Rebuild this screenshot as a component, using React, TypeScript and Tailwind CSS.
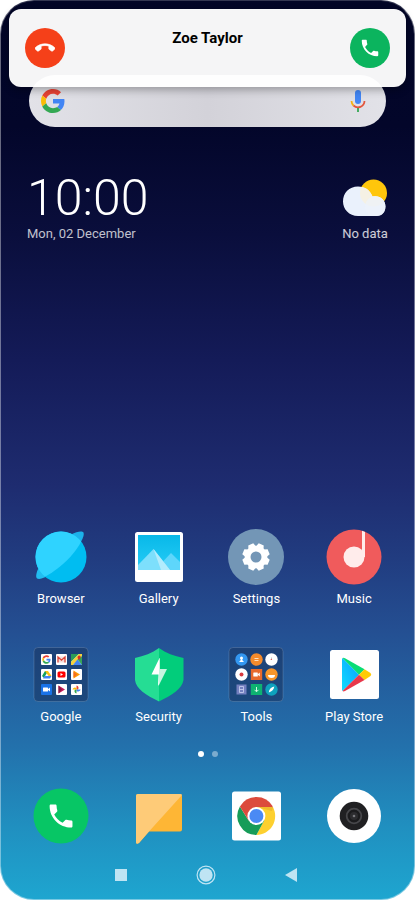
import type { ReactNode } from "react";

const PHONE_PATH =
  "M6.62 10.79c1.44 2.83 3.76 5.14 6.59 6.59l2.2-2.2c.27-.27.67-.36 1.02-.24 1.12.37 2.33.57 3.57.57.55 0 1 .45 1 1V20c0 .55-.45 1-1 1-9.39 0-17-7.61-17-17 0-.55.45-1 1-1h3.5c.55 0 1 .45 1 1 0 1.25.2 2.45.57 3.57.11.35.03.74-.25 1.02l-2.2 2.2z";

const HANG_UP_PATH =
  "M12 9c-1.6 0-3.15.25-4.6.72v3.1c0 .39-.23.74-.56.9-.98.49-1.87 1.12-2.66 1.85-.18.18-.43.28-.7.28-.28 0-.53-.11-.71-.29L.29 13.08c-.18-.17-.29-.42-.29-.7 0-.28.11-.53.29-.71C3.34 8.78 7.46 7 12 7s8.66 1.78 11.71 4.67c.18.18.29.43.29.71 0 .28-.11.53-.29.71l-2.48 2.48c-.18.18-.43.29-.71.29-.27 0-.52-.11-.7-.28-.79-.74-1.69-1.36-2.67-1.85-.33-.16-.56-.5-.56-.9v-3.1C15.15 9.25 13.6 9 12 9z";

function GoogleMark() {
  return (
    <>
      <path fill="#EA4335" d="M24 9.5c3.54 0 6.71 1.22 9.21 3.6l6.85-6.85C35.9 2.38 30.47 0 24 0 14.62 0 6.51 5.38 2.56 13.22l7.98 6.19C12.43 13.72 17.74 9.5 24 9.5z" />
      <path fill="#4285F4" d="M46.98 24.55c0-1.57-.15-3.09-.38-4.55H24v9.02h12.94c-.58 2.96-2.26 5.48-4.78 7.18l7.73 6c4.51-4.18 7.09-10.36 7.09-17.65z" />
      <path fill="#FBBC05" d="M10.53 28.59c-.48-1.45-.76-2.99-.76-4.59s.27-3.14.76-4.59l-7.98-6.19C.92 16.46 0 20.12 0 24c0 3.88.92 7.54 2.56 10.78l7.97-6.19z" />
      <path fill="#34A853" d="M24 48c6.48 0 11.93-2.13 15.89-5.81l-7.73-6c-2.15 1.45-4.92 2.3-8.16 2.3-6.26 0-11.57-4.22-13.47-9.91l-7.98 6.19C6.51 42.62 14.62 48 24 48z" />
    </>
  );
}

function Icon({ children }: { children: ReactNode }) {
  return (
    <svg viewBox="0 0 56 56" className="size-14" aria-hidden="true">
      {children}
    </svg>
  );
}

function BrowserIcon() {
  return (
    <Icon>
      <defs>
        <clipPath id="globe">
          <circle cx="28" cy="28" r="25.5" />
        </clipPath>
      </defs>
      <path d="M38 5.500C44 2.500 49 1.500 50.500 3.500 52 7 47 15 42 22Z" fill="#1cb2ea" />
      <path d="M6 38C3 44 2.500 48 4 49.500 7 51 12 48.500 18 45Z" fill="#22bdf0" />
      <circle cx="28" cy="28" r="25.500" fill="#00bdf1" />
      <path d="M0 0H52C50 14 41 25 30 35 22 42 15 46.500 9 49L0 50Z" fill="#2fd3ff" clipPath="url(#globe)" />
    </Icon>
  );
}

function GalleryIcon() {
  return (
    <Icon>
      <defs>
        <linearGradient id="sky" x1="0" y1="0" x2="0" y2="1">
          <stop offset="0" stopColor="#08b8e8" />
          <stop offset="1" stopColor="#26cdf7" />
        </linearGradient>
      </defs>
      <rect x="4" y="3" width="48" height="50" rx="2.500" fill="#fff" />
      <rect x="7" y="6" width="42" height="35" fill="url(#sky)" />
      <path d="M24 41 40 24 49 33V41Z" fill="#5ed6fb" />
      <path d="M7 36 22.500 20 39 41H7Z" fill="#7ddffc" />
      <path d="M22.500 20 39 41H30Z" fill="#b3ecfd" />
    </Icon>
  );
}

function SettingsIcon() {
  return (
    <Icon>
      <circle cx="28" cy="28" r="28" fill="#7396b6" />
      <g fill="#fff">
        <circle cx="28" cy="28" r="11.300" />
        {[22.5, 67.5, 112.5, 157.5].map((angle) => (
          <path
            key={angle}
            d="M24 18 25.300 14.300H30.700L32 18V38L30.700 41.700H25.300L24 38Z"
            transform={`rotate(${angle} 28 28)`}
          />
        ))}
      </g>
      <circle cx="28" cy="28" r="5.500" fill="#7396b6" />
    </Icon>
  );
}

function MusicIcon() {
  return (
    <Icon>
      <circle cx="28" cy="28" r="27.500" fill="#f05b5c" />
      <circle cx="28" cy="28" r="10.500" fill="#ffeceb" />
      <path d="M36 1.800 39 3V28H36Z" fill="#ffeceb" />
    </Icon>
  );
}

function SecurityIcon() {
  return (
    <Icon>
      <path d="M28 1C21 6 13 9 4 11V33C5 42 15 48 28 54.500Z" fill="#25dd94" />
      <path d="M28 1C35 6 43 9 52.500 11V33C51 42 41 48 28 54.500Z" fill="#02cd7b" />
      <path d="M28.500 11 20.500 27.500H27.500L27 39 28 37.500V11Z" fill="#fff" />
      <path d="M28 12V38L36 22H29V11Z" fill="#c5f5e0" />
    </Icon>
  );
}

function PlayIcon() {
  return (
    <Icon>
      <defs>
        <linearGradient id="playBlue" x1="1" y1="0" x2="0" y2="1">
          <stop offset="0" stopColor="#0a9fff" />
          <stop offset="1" stopColor="#11dcff" />
        </linearGradient>
      </defs>
      <rect x="4" y="3" width="49" height="49" rx="2.500" fill="#fff" />
      <path d="M16.500 11Q16 11.500 16 12.500V42.500Q16 43.500 16.500 44L33 27.800Z" fill="url(#playBlue)" />
      <path d="M16.500 11Q17.500 10.500 19 11.300L38.500 22.300 33 27.800Z" fill="#08dd76" />
      <path d="M38.500 22.300 44.500 26Q46 27.800 44.500 29L38.500 33 33 27.800Z" fill="#ffcb05" />
      <path d="M16.500 44Q17.500 44.800 19 44L38.500 33 33 27.800Z" fill="#e8384b" />
    </Icon>
  );
}

function FolderBase() {
  return <rect x="1" y="0.500" width="54" height="54" rx="4" fill="#17335f" fillOpacity="0.550" stroke="#fff" strokeOpacity="0.150" />;
}

function GoogleFolderIcon() {
  return (
    <Icon>
      <FolderBase />
      {[7, 22, 37].map((y) =>
        [8, 23, 38].map((x) => (
          <rect key={`${x}-${y}`} x={x} y={y} width="11" height="11" rx="1" fill={x === 8 && y === 37 ? "#1a73e8" : "#fff"} />
        )),
      )}
      <g transform="translate(9.300 8.300) scale(0.175)">
        <GoogleMark />
      </g>
      <path d="M24.500 9.500H32.500V15.500H24.500Z" fill="#f3dedc" />
      <path d="M25 15.500V10L28.500 13.200 32 10V15.500" fill="none" stroke="#dc4437" strokeWidth="1.300" />
      <path d="M38 7H46L38 15Z" fill="#2d9c59" />
      <path d="M38 15 46 7H49V9L40 18H38Z" fill="#f5d13d" />
      <path d="M40 18 44.500 12.500 49 18Z" fill="#4285f4" />
      <path d="M44.500 12.500 49 9V18Z" fill="#35a35a" />
      <path d="M46 13C44 11 44 9 46 8.500 48.500 9 48 11 46 13Z" fill="#d93025" />
      <path d="M12 24H15L11 31 9 29Z" fill="#13a05d" />
      <path d="M12 24H15L18.500 29H15.500Z" fill="#fbc116" />
      <path d="M11.500 29H18.500L17 31.500H10Z" fill="#4285f4" />
      <rect x="24.500" y="24.500" width="8" height="6" rx="1.500" fill="#f00" />
      <path d="M27.500 26V29L30 27.500Z" fill="#fff" />
      <path d="M40.500 23.500 47 27.500 40.500 31.500Z" fill="#ff9800" />
      <path d="M40.500 24.500 44 27.500 40.500 30.500Z" fill="#f36d21" />
      <rect x="10" y="40.500" width="5" height="4" rx="0.500" fill="#fff" />
      <path d="M14.500 42.500 17 40.500V44.500Z" fill="#fff" />
      <path d="M25.500 38.500 32 42.500 25.500 46.500Z" fill="#c2185b" />
      <path d="M25.500 38.500 29 42.500 25.500 46.500Z" fill="#8c1d3f" />
      <path d="M43.500 42.500V38.500A2.500 2.500 0 0 1 45 42.500Z" fill="#ea4335" />
      <path d="M43.500 42.500H47.500A2.500 2.500 0 0 1 43.500 44Z" fill="#4285f4" />
      <path d="M43.500 42.500V46.500A2.500 2.500 0 0 1 42 42.500Z" fill="#34a853" />
      <path d="M43.500 42.500H39.500A2.500 2.500 0 0 1 43.500 41Z" fill="#fbbc05" />
    </Icon>
  );
}

function ToolsFolderIcon() {
  return (
    <Icon>
      <FolderBase />
      <circle cx="13.500" cy="12.500" r="6.200" fill="#3397f1" />
      <circle cx="13.500" cy="11" r="1.500" fill="#fff" />
      <path d="M12.800 11H14.200V13L16 15H11L12.800 13Z" fill="#fff" />
      <circle cx="28.500" cy="12.500" r="6.200" fill="#f58b2b" />
      <path d="M26.500 11.500H30.500M26.500 13.500H30.500" stroke="#fde0c0" />
      <circle cx="43.500" cy="12.500" r="6.200" fill="#fff" />
      <path d="M43.500 10.500V12.500H42.500" fill="none" stroke="#999" strokeWidth="0.600" />
      <circle cx="43.500" cy="12.500" r="0.600" fill="#e44" />
      <circle cx="13.500" cy="27.500" r="6.200" fill="#fff" />
      <circle cx="13.500" cy="27.500" r="2" fill="#d93a3f" />
      <rect x="22.800" y="22" width="11.400" height="11" fill="#e76a2c" />
      <rect x="25.300" y="25.500" width="4.500" height="4" rx="0.500" fill="#fff" />
      <path d="M29.500 27.500 31.800 25.500V29.500Z" fill="#fff" />
      <circle cx="43.500" cy="27.500" r="6.200" fill="#f7962a" />
      <path d="M40 28H47A3.500 3 0 0 1 40 28Z" fill="#fff" />
      <rect x="8.500" y="37.500" width="10" height="10" fill="#7480bf" />
      <path d="M11.500 39.500H15.500V45.500H11.500ZM11.500 42.500H15.500" fill="none" stroke="#cdd3f2" strokeWidth="0.800" />
      <rect x="22.800" y="37" width="11.400" height="11" fill="#0eb271" />
      <path d="M28.500 40V44.500M26.500 42.800 28.500 44.800 30.500 42.800" fill="none" stroke="#d4fbe8" />
      <circle cx="43.500" cy="42.500" r="6.200" fill="#0ea2bd" />
      <path d="M40.800 45.500C41 42 43 40 46.300 39.500 46 42.500 44 44.500 40.800 45.500Z" fill="#fff" />
    </Icon>
  );
}

function DialerIcon() {
  return (
    <Icon>
      <circle cx="28" cy="28" r="27.500" fill="#07c665" />
      <path d={PHONE_PATH} fill="#fff" transform="translate(12.800 12.800) scale(1.270)" />
    </Icon>
  );
}

function MessagesIcon() {
  return (
    <Icon>
      <path d="M7 6H49Q51 6 51 8V41.500Q51 43.500 49 43.500H18L8 55Q5 57 5 54V8Q5 6 7 6Z" fill="#feb635" />
      <path d="M7 6H49Q50.500 6 51 7L18 43.500 8 55Q5 57 5 54V8Q5 6 7 6Z" fill="#fecb78" />
    </Icon>
  );
}

function ChromeIcon() {
  return (
    <Icon>
      <rect x="4" y="3.500" width="49" height="49" rx="2.500" fill="#fff" />
      <path d="M28.400 28 11.900 18.500A19 19 0 0 1 44.900 18.500Z" fill="#dc4b3c" />
      <path d="M28.400 19H44.900A19 19 0 0 1 28.400 47L36.200 32.500Z" fill="#fdd02f" />
      <path d="M11.900 18.500A19 19 0 0 0 28.400 47L36.200 32.500 28.400 28 20.600 32.500Z" fill="#169c58" />
      <path d="M11.900 18.500 20.600 32.500 24 19Z" fill="#dc4b3c" />
      <path d="M28.400 19H45.200L44 23Z" fill="#e2a52a" fillOpacity="0.500" />
      <circle cx="28.400" cy="28" r="9" fill="#fff" />
      <circle cx="28.400" cy="28" r="7" fill="#4a8af4" />
    </Icon>
  );
}

function CameraIcon() {
  return (
    <Icon>
      <circle cx="28" cy="28" r="27" fill="#fff" />
      <circle cx="28" cy="28" r="14.300" fill="#202022" />
      <circle cx="28" cy="28" r="7.300" fill="#1b1b1d" stroke="#47474a" strokeWidth="1.800" />
      <circle cx="28" cy="28" r="4" fill="#2c2c2f" />
      <circle cx="28" cy="28" r="1.300" fill="#77777c" />
    </Icon>
  );
}

function WeatherIcon() {
  return (
    <svg viewBox="0 0 46 38" className="h-[38px] w-[46px]" aria-hidden="true">
      <defs>
        <clipPath id="cloud">
          <path d="M16 7.500C23 7.500 28 11 30.500 17.500 38 16 43.500 21 43.500 27.500 43.500 33 40 37 35 37H16C7 37 1 30 1 22.500 1 14 7 7.500 16 7.500Z" />
        </clipPath>
      </defs>
      <circle cx="31.500" cy="14" r="13.500" fill="#ffc60b" />
      <g clipPath="url(#cloud)">
        <rect width="46" height="38" fill="#eaf1fc" />
        <circle cx="31.500" cy="14" r="13.500" fill="#f5f1e4" />
        <circle cx="33.500" cy="27.500" r="10.500" fill="#edf2fb" fillOpacity="0.700" />
      </g>
    </svg>
  );
}

const apps = [
  { name: "Browser", icon: <BrowserIcon /> },
  { name: "Gallery", icon: <GalleryIcon /> },
  { name: "Settings", icon: <SettingsIcon /> },
  { name: "Music", icon: <MusicIcon /> },
  { name: "Google", icon: <GoogleFolderIcon /> },
  { name: "Security", icon: <SecurityIcon /> },
  { name: "Tools", icon: <ToolsFolderIcon /> },
  { name: "Play Store", icon: <PlayIcon /> },
];

const dock = [
  { name: "Phone", icon: <DialerIcon /> },
  { name: "Messages", icon: <MessagesIcon /> },
  { name: "Chrome", icon: <ChromeIcon /> },
  { name: "Camera", icon: <CameraIcon /> },
];

function CallBanner() {
  return (
    <section
      aria-label="Incoming call"
      className="absolute inset-x-2 top-2 z-10 flex h-[78px] items-center justify-between rounded-xl bg-white/96 px-4 shadow-[0_3px_8px_rgba(0,0,0,0.3)]"
    >
      <button type="button" aria-label="Decline" className="flex size-10 items-center justify-center rounded-full bg-[#f54019]">
        <svg viewBox="0 0 24 24" className="size-5" fill="#fff" stroke="#fff" strokeWidth="0.800" aria-hidden="true">
          <path d={HANG_UP_PATH} />
        </svg>
      </button>
      <h1 className="mb-5 text-[15px] leading-5 font-bold text-black">Zoe Taylor</h1>
      <button type="button" aria-label="Accept" className="flex size-10 items-center justify-center rounded-full bg-[#0bb45e]">
        <svg viewBox="0 0 24 24" className="size-[22px]" fill="#fff" aria-hidden="true">
          <path d={PHONE_PATH} />
        </svg>
      </button>
    </section>
  );
}

export default function App() {
  return (
    <div className="bg-white font-['Roboto',sans-serif]">
      <main className="relative flex min-h-screen flex-col rounded-[34px] border border-white/40 border-t-white/20 bg-linear-[180deg,#020526_0%,#03062a_14%,#0a0e3c_26%,#141b58_40%,#1e2c70_54%,#213c80_62%,#244f92_70%,#2371ac_83%,#2090c0_92%,#1ea6d0_100%] bg-origin-border text-white">
        <CallBanner />

        <label className="mx-7 mt-[74px] flex h-[52px] items-center gap-3 rounded-full bg-linear-to-r from-[#e2e2e8] via-[#d3d2d9] to-[#e2e2e8] px-3">
          <svg viewBox="0 0 48 48" className="size-6 shrink-0" aria-hidden="true">
            <GoogleMark />
          </svg>
          <input type="text" aria-label="Search" className="min-w-0 flex-1 bg-transparent text-sm text-gray-900 outline-none" />
          <button type="button" aria-label="Voice search" className="px-2">
            <svg viewBox="0 0 16 22" className="h-[22px] w-4" aria-hidden="true">
              <rect x="5" y="0" width="6" height="14" rx="3" fill="#4286f4" />
              <path d="M1.500 11A6.500 6.500 0 0 0 3.500 15.500" fill="none" stroke="#f5b212" strokeWidth="1.800" />
              <path d="M3.500 15.500A6.500 6.500 0 0 0 14.500 11" fill="none" stroke="#e2553c" strokeWidth="1.800" />
              <path d="M8 18V22" stroke="#34a853" strokeWidth="1.800" />
            </svg>
          </button>
        </label>

        <section className="mx-[26px] mt-[52px] flex items-start justify-between">
          <div className="flex flex-col">
            <time className="text-[50px] leading-[38px] font-light">10:00</time>
            <p className="mt-[7px] text-[13px] leading-5 text-white/75">Mon, 02 December</p>
          </div>
          <div className="flex flex-col items-center">
            <WeatherIcon />
            <p className="mt-[7px] text-[13px] leading-5 text-white/80">No data</p>
          </div>
        </section>

        <nav aria-label="Apps" className="mt-auto grid grid-cols-4 gap-y-[38px] px-[11px] pt-10">
          {apps.map((app) => (
            <button key={app.name} type="button" className="flex flex-col items-center gap-1">
              {app.icon}
              <span className="text-[13px] leading-5">{app.name}</span>
            </button>
          ))}
        </nav>

        <div className="mt-6 flex justify-center gap-2" aria-hidden="true">
          <span className="size-1.5 rounded-full bg-white" />
          <span className="size-1.5 rounded-full bg-white/40" />
        </div>

        <nav aria-label="Dock" className="mt-[31px] grid grid-cols-4 px-[11px]">
          {dock.map((app) => (
            <button key={app.name} type="button" aria-label={app.name} className="flex justify-center">
              {app.icon}
            </button>
          ))}
        </nav>

        <nav aria-label="System" className="mt-[21px] mb-[14px] flex h-5 items-center justify-center gap-[65px] pr-1">
          <button type="button" aria-label="Recent apps" className="flex size-5 items-center justify-center">
            <span className="size-3 bg-[#bfe4f3]" />
          </button>
          <button type="button" aria-label="Home" className="flex size-5 items-center justify-center rounded-full">
            <svg viewBox="0 0 20 20" className="size-5" aria-hidden="true">
              <circle cx="10" cy="10" r="8.900" fill="none" stroke="#bfe4f3" strokeWidth="1.200" />
              <circle cx="10" cy="10" r="6.700" fill="#bfe4f3" />
            </svg>
          </button>
          <button type="button" aria-label="Back" className="flex size-5 items-center justify-center">
            <svg viewBox="0 0 12 14" className="h-3.5 w-3" aria-hidden="true">
              <path d="M0 7 12 0V14Z" fill="#bfe4f3" />
            </svg>
          </button>
        </nav>
      </main>
    </div>
  );
}
